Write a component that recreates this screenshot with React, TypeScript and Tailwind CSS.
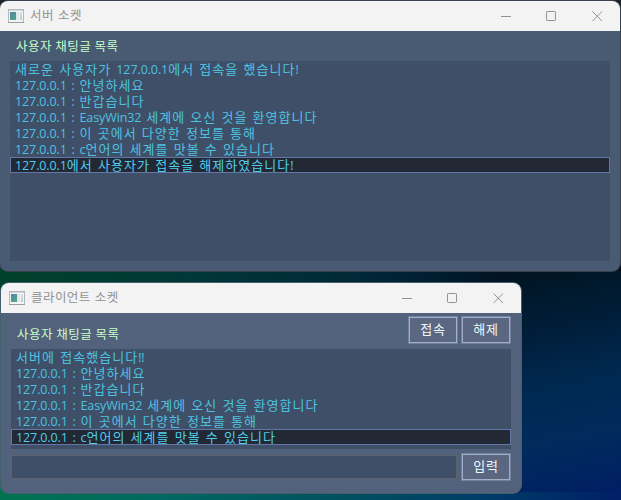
import React from "react";

const hangul = "font-['Liberation_Sans','Noto_Sans_CJK_KR',sans-serif] text-[13px] tracking-[1.04px] [word-spacing:0.5px]";
const latin = "font-['Open_Sans',sans-serif] text-[12.5px] leading-[15px] tracking-[-0.1px] [word-spacing:1.6px]";

/** Sets Korean and Latin runs each in their own face. */
function Mixed({ text }: { text: string }) {
  const runs = text.match(/[A-Za-z0-9.:!]+(?: :)? ?|[^A-Za-z0-9.:!]+/g) ?? [];
  return (
    <>
      {runs.map((run, i) => (
        <span key={i} className={/[A-Za-z0-9.:!]/.test(run) ? latin : hangul}>
          {run}
        </span>
      ))}
    </>
  );
}

function AppIcon() {
  return (
    <svg width="16" height="14" viewBox="0 0 16 14" shapeRendering="crispEdges">
      <defs>
        <linearGradient id="iconPane" x1="0" y1="0" x2="0.6" y2="1">
          <stop offset="0" stopColor="#5583ac" />
          <stop offset="1" stopColor="#4fa488" />
        </linearGradient>
        <linearGradient id="iconStrip" x1="0" y1="0" x2="0" y2="1">
          <stop offset="0" stopColor="#d3dde4" />
          <stop offset="1" stopColor="#b4d2c6" />
        </linearGradient>
      </defs>
      <rect width="16" height="14" fill="#b4b7bb" />
      <rect x="1" y="1" width="13" height="1" fill="#d4d6d9" />
      <rect x="1" y="2" width="14" height="11" fill="#f4f4f4" />
      <rect x="2" y="3" width="6" height="8" fill="url(#iconPane)" />
      <rect x="8" y="3" width="3" height="8" fill="#e2e7e9" />
      <rect x="12" y="3" width="2" height="8" fill="url(#iconStrip)" />
      <rect x="0" y="13" width="16" height="1" fill="#999da1" />
    </svg>
  );
}

function TitleBar({ title }: { title: string }) {
  return (
    <header className="flex h-[30px] shrink-0 items-center bg-[#f3f3f3] pl-2 text-[#929292]">
      <AppIcon />
      <h1 className="ml-[6px] flex-1 pb-[2px] whitespace-nowrap font-['Noto_Sans_CJK_KR',sans-serif] text-[12.5px] leading-[26px] font-normal tracking-[0.45px] [word-spacing:0.8px]">
        {title}
      </h1>
      <svg width="104" height="12" viewBox="0 0 104 12" fill="none" stroke="currentColor" className="mr-[15px]">
        <path d="M0 6.5h10" />
        <rect x="45.5" y="1.5" width="9" height="9" rx="0.8" />
        <path d="m91.5 1.5 9.5 9.5m0-9.5-9.5 9.5" />
      </svg>
    </header>
  );
}

function Label() {
  return (
    <div className="whitespace-nowrap font-['Noto_Sans_CJK_KR',sans-serif] text-[12.5px] leading-4 tracking-[0.5px] text-[#c8ffc8]">
      사용자 채팅글 목록
    </div>
  );
}

function MessageList({ items, selected }: { items: string[]; selected: number }) {
  return (
    <ul className="h-full bg-[#404f68]">
      {items.map((item, i) => (
        <li
          key={i}
          className={
            i === selected
              ? "flex h-4 items-baseline border border-[#6478a8] bg-[#222834] pl-1 leading-[14px] whitespace-pre text-[#50cdec]"
              : "flex h-4 items-baseline pl-[5px] leading-[18px] whitespace-pre text-[#4cc2e0]"
          }
        >
          <Mixed text={item} />
        </li>
      ))}
    </ul>
  );
}

function Button({ children }: { children: React.ReactNode }) {
  return (
    <button className="h-7 w-[50px] border border-[#71809e] bg-[#5b6681] font-['Noto_Sans_CJK_KR',sans-serif] text-[13px] leading-6 tracking-[0.8px] text-[#edfafa]">
      <span className="block h-full border border-[#a2afca] leading-[22px]">{children}</span>
    </button>
  );
}

const serverLog = [
  "새로운 사용자가 127.0.0.1에서 접속을 했습니다!",
  "127.0.0.1 : 안녕하세요",
  "127.0.0.1 : 반갑습니다",
  "127.0.0.1 : EasyWin32 세계에 오신 것을 환영합니다",
  "127.0.0.1 : 이 곳에서 다양한 정보를 통해",
  "127.0.0.1 : c언어의 세계를 맛볼 수 있습니다",
  "127.0.0.1에서 사용자가 접속을 해제하였습니다!",
];

const clientLog = ["서버에 접속했습니다!!", ...serverLog.slice(1, 6)];

export default function App() {
  return (
    <main className="relative h-[500px] w-[621px] overflow-hidden bg-[linear-gradient(90deg,#00412a_0%,#003638_33%,#002536_62%,#000c1d_88%,#000b1a_100%)]">
      <div className="absolute inset-x-0 top-0 h-[260px] bg-[#202428]" />
      <div className="absolute top-[271px] right-0 h-[229px] w-[110px] bg-[linear-gradient(168deg,#001421_0%,#001d38_25%,#002951_50%,#002b5c_72%,#001c65_100%)]" />
      <div className="absolute top-[300px] left-0 h-[200px] w-2 bg-[linear-gradient(180deg,#004a30,#007450)]" />
      <div className="absolute bottom-0 left-0 h-2 w-full bg-[linear-gradient(90deg,#007250_0%,#006961_25%,#00505f_55%,#003c68_78%,#001f67_100%)]" />

      <section className="absolute top-px left-0 flex h-[270px] w-[620px] flex-col overflow-hidden rounded-lg bg-[#495a73] shadow-[0_0_0_1px_#39434f]">
        <TitleBar title="서버 소켓" />
        <div className="flex flex-1 flex-col px-[10px] pt-[7px] pb-[10px]">
          <div className="h-[23px] pl-[6px]">
            <Label />
          </div>
          <div className="flex-1">
            <MessageList items={serverLog} selected={6} />
          </div>
        </div>
      </section>

      <section className="absolute top-[283px] left-px flex h-[210px] w-[520px] flex-col overflow-hidden rounded-lg bg-[#53627c] shadow-[0_0_0_1px_#45606d]">
        <TitleBar title="클라이언트 소켓" />
        <div className="flex flex-1 flex-col px-[10px] pt-[3px]">
          <div className="flex h-[33px] justify-between pl-[6px]">
            <div className="pt-[10px]">
              <Label />
            </div>
            <div className="flex gap-[3px]">
              <Button>접속</Button>
              <Button>해제</Button>
            </div>
          </div>
          <div className="h-[100px]">
            <MessageList items={clientLog} selected={5} />
          </div>
          <form className="mt-1 flex items-center justify-between">
            <input className="h-6 w-[446px] border border-[#5d626b] bg-[#404f68] px-1 text-[13px] text-[#4bb9d8] outline-none" />
            <Button>입력</Button>
          </form>
        </div>
      </section>
    </main>
  );
}
